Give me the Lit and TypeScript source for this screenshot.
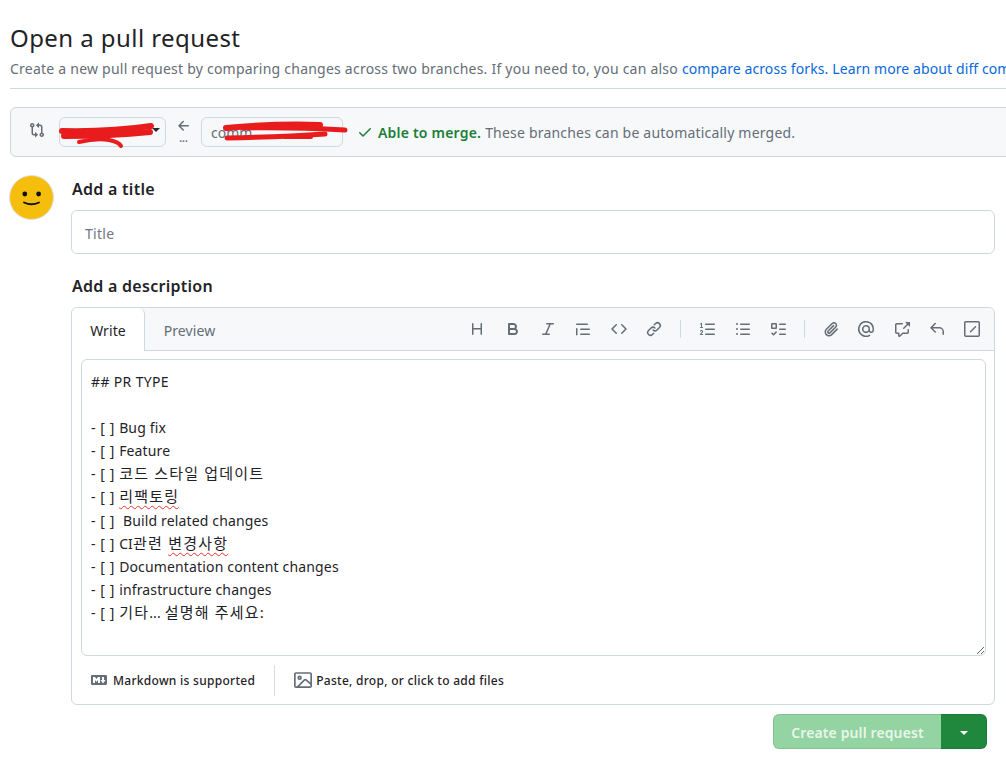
import { LitElement, html, css } from "lit";
import { customElement } from "lit/decorators.js";

const P: Record<string, string> = {
  compare: "M9.573.677A.25.25 0 0 1 10 .854V2.5h1A2.5 2.5 0 0 1 13.5 5v5.628a2.251 2.251 0 1 1-1.5 0V5a1 1 0 0 0-1-1h-1v1.646a.25.25 0 0 1-.427.177L7.177 3.427a.25.25 0 0 1 0-.354ZM6 12v-1.646a.25.25 0 0 1 .427-.177l2.396 2.396a.25.25 0 0 1 0 .354l-2.396 2.396A.25.25 0 0 1 6 15.146V13.5H5A2.5 2.5 0 0 1 2.5 11V5.372a2.25 2.25 0 1 1 1.5 0V11a1 1 0 0 0 1 1ZM4 3.25a.75.75 0 1 0-1.5 0 .75.75 0 0 0 1.5 0ZM12.75 12a.75.75 0 1 0 0 1.5.75.75 0 0 0 0-1.5Z",
  arrow: "M7.78 12.53a.75.75 0 0 1-1.06 0L2.47 8.28a.75.75 0 0 1 0-1.06l4.25-4.25a.751.751 0 0 1 1.042.018.751.751 0 0 1 .018 1.042L4.81 7h7.44a.75.75 0 0 1 0 1.5H4.81l2.97 2.97a.75.75 0 0 1 0 1.06Z",
  check: "M13.78 4.22a.75.75 0 0 1 0 1.06l-7.25 7.25a.75.75 0 0 1-1.06 0L2.22 9.28a.751.751 0 0 1 .018-1.042.751.751 0 0 1 1.042-.018L6 10.94l6.72-6.72a.75.75 0 0 1 1.06 0Z",
  heading: "M3.75 2a.75.75 0 0 1 .75.75V7h7V2.75a.75.75 0 0 1 1.5 0v10.5a.75.75 0 0 1-1.5 0V8.5h-7v4.75a.75.75 0 0 1-1.5 0V2.75A.75.75 0 0 1 3.75 2Z",
  bold: "M4 2h4.5a3.501 3.501 0 0 1 2.852 5.53A3.499 3.499 0 0 1 9.5 14H4a1 1 0 0 1-1-1V3a1 1 0 0 1 1-1Zm1 7v3h4.5a1.5 1.5 0 0 0 0-3Zm3.5-2a1.5 1.5 0 0 0 0-3H5v3Z",
  italic: "M6 2.75A.75.75 0 0 1 6.75 2h6.5a.75.75 0 0 1 0 1.5h-2.505l-3.858 9H9.25a.75.75 0 0 1 0 1.5h-6.5a.75.75 0 0 1 0-1.5h2.505l3.858-9H6.75A.75.75 0 0 1 6 2.75Z",
  quote: "M1.75 2.5h10.5a.75.75 0 0 1 0 1.5H1.75a.75.75 0 0 1 0-1.5Zm4 5h8.5a.75.75 0 0 1 0 1.5h-8.5a.75.75 0 0 1 0-1.5Zm0 5h8.5a.75.75 0 0 1 0 1.5h-8.5a.75.75 0 0 1 0-1.5ZM2.5 7.75v6a.75.75 0 0 1-1.5 0v-6a.75.75 0 0 1 1.5 0Z",
  code: "m11.28 3.22 4.25 4.25a.75.75 0 0 1 0 1.06l-4.25 4.25a.749.749 0 0 1-1.275-.326.749.749 0 0 1 .215-.734L13.94 8l-3.72-3.72a.749.749 0 0 1 .326-1.275.749.749 0 0 1 .734.215Zm-6.56 0a.751.751 0 0 1 1.042.018.751.751 0 0 1 .018 1.042L2.06 8l3.72 3.72a.749.749 0 0 1-.326 1.275.749.749 0 0 1-.734-.215L.47 8.53a.75.75 0 0 1 0-1.06Z",
  link: "m7.775 3.275 1.25-1.25a3.5 3.5 0 1 1 4.95 4.95l-2.5 2.5a3.5 3.5 0 0 1-4.95 0 .751.751 0 0 1 .018-1.042.751.751 0 0 1 1.042-.018 1.998 1.998 0 0 0 2.83 0l2.5-2.5a2.002 2.002 0 0 0-2.83-2.83l-1.25 1.25a.751.751 0 0 1-1.042-.018.751.751 0 0 1-.018-1.042Zm-4.69 9.64a1.998 1.998 0 0 0 2.83 0l1.25-1.25a.751.751 0 0 1 1.042.018.751.751 0 0 1 .018 1.042l-1.25 1.25a3.5 3.5 0 1 1-4.95-4.95l2.5-2.5a3.5 3.5 0 0 1 4.95 0 .751.751 0 0 1-.018 1.042.751.751 0 0 1-1.042.018 1.998 1.998 0 0 0-2.83 0l-2.5 2.5a1.998 1.998 0 0 0 0 2.83Z",
  ol: "M5 3.25a.75.75 0 0 1 .75-.75h8.5a.75.75 0 0 1 0 1.5h-8.5A.75.75 0 0 1 5 3.25Zm0 5a.75.75 0 0 1 .75-.75h8.5a.75.75 0 0 1 0 1.5h-8.5A.75.75 0 0 1 5 8.25Zm0 5a.75.75 0 0 1 .75-.75h8.5a.75.75 0 0 1 0 1.5h-8.5a.75.75 0 0 1-.75-.75ZM.924 10.32a.5.5 0 0 1-.851-.525l.001-.001.001-.002.002-.004.007-.011c.097-.144.215-.273.348-.384.228-.19.588-.392 1.068-.392.468 0 .858.181 1.126.484.259.294.377.673.377 1.038 0 .987-.686 1.495-1.156 1.845l-.047.035c-.303.225-.522.4-.654.597h1.357a.5.5 0 0 1 0 1H.5a.5.5 0 0 1-.5-.5c0-1.005.692-1.52 1.167-1.875l.035-.025c.531-.396.8-.625.8-1.078a.57.57 0 0 0-.128-.376C1.806 10.068 1.695 10 1.5 10a.658.658 0 0 0-.429.163.835.835 0 0 0-.144.153ZM2.003 2.5V6h.503a.5.5 0 0 1 0 1H.5a.5.5 0 0 1 0-1h.503V3.308l-.28.14a.5.5 0 0 1-.446-.895l1.003-.5a.5.5 0 0 1 .723.447Z",
  ul: "M5.75 2.5h8.5a.75.75 0 0 1 0 1.5h-8.5a.75.75 0 0 1 0-1.5Zm0 5h8.5a.75.75 0 0 1 0 1.5h-8.5a.75.75 0 0 1 0-1.5Zm0 5h8.5a.75.75 0 0 1 0 1.5h-8.5a.75.75 0 0 1 0-1.5ZM2 14a1 1 0 1 1 0-2 1 1 0 0 1 0 2Zm1-6a1 1 0 1 1-2 0 1 1 0 0 1 2 0ZM2 4a1 1 0 1 1 0-2 1 1 0 0 1 0 2Z",
  task: "M2 2h4a1 1 0 0 1 1 1v4a1 1 0 0 1-1 1H2a1 1 0 0 1-1-1V3a1 1 0 0 1 1-1Zm4.655 8.595a.75.75 0 0 1 0 1.06L4.03 14.28a.75.75 0 0 1-1.06 0l-1.5-1.5a.749.749 0 0 1 .326-1.275.749.749 0 0 1 .734.215l.97.97 2.095-2.095a.75.75 0 0 1 1.06 0ZM9.75 2.5h5.5a.75.75 0 0 1 0 1.5h-5.5a.75.75 0 0 1 0-1.5Zm0 5h5.5a.75.75 0 0 1 0 1.5h-5.5a.75.75 0 0 1 0-1.5Zm0 5h5.5a.75.75 0 0 1 0 1.5h-5.5a.75.75 0 0 1 0-1.5Zm-7.25-9v3h3v-3Z",
  clip: "M12.212 3.02a1.753 1.753 0 0 0-2.478.003l-5.83 5.83a3.007 3.007 0 0 0-.88 2.127c0 .795.315 1.551.88 2.116.567.567 1.333.89 2.126.89.79 0 1.548-.321 2.116-.89l5.48-5.48a.75.75 0 0 1 1.061 1.06l-5.48 5.48a4.492 4.492 0 0 1-3.177 1.33c-1.2 0-2.345-.487-3.187-1.33a4.483 4.483 0 0 1-1.32-3.176c0-1.2.475-2.345 1.32-3.186l5.83-5.83a3.25 3.25 0 0 1 5.553 2.297c0 .863-.343 1.691-.953 2.301L7.439 12.39c-.375.377-.884.59-1.416.593a1.998 1.998 0 0 1-1.412-.593 1.992 1.992 0 0 1 0-2.828l5.48-5.48a.751.751 0 0 1 1.042.018.751.751 0 0 1 .018 1.042l-5.48 5.48a.492.492 0 0 0 0 .707.499.499 0 0 0 .354.147.495.495 0 0 0 .352-.147l5.833-5.827a1.755 1.755 0 0 0 0-2.481Z",
  mention: "M4.75 2.37a6.501 6.501 0 0 0 6.5 11.26.75.75 0 0 1 .75 1.298A7.999 7.999 0 0 1 .989 4.148 8 8 0 0 1 16 7.75v1.5a2.75 2.75 0 0 1-5.072 1.475 3.999 3.999 0 0 1-6.65-4.19A4 4 0 0 1 12 8v1.25a1.25 1.25 0 0 0 2.5 0V7.867a6.5 6.5 0 0 0-9.75-5.496ZM10.5 8a2.5 2.5 0 1 0-5 0 2.5 2.5 0 0 0 5 0Z",
  ref: "M2.75 3.5a.25.25 0 0 0-.25.25v7.5c0 .138.112.25.25.25h2a.75.75 0 0 1 .75.75v2.19l2.72-2.72a.749.749 0 0 1 .53-.22h4.5a.25.25 0 0 0 .25-.25v-2.5a.75.75 0 0 1 1.5 0v2.5A1.75 1.75 0 0 1 13.25 13H9.06l-2.573 2.573A1.458 1.458 0 0 1 4 14.543V13H2.75A1.75 1.75 0 0 1 1 11.25v-7.5C1 2.784 1.784 2 2.75 2h5.5a.75.75 0 0 1 0 1.5ZM16 1.25v4.146a.25.25 0 0 1-.427.177L14.03 4.03l-3.75 3.75a.749.749 0 0 1-1.275-.326.749.749 0 0 1 .215-.734l3.75-3.75-1.543-1.543A.25.25 0 0 1 11.604 1h4.146a.25.25 0 0 1 .25.25Z",
  reply: "M6.78 1.97a.75.75 0 0 1 0 1.06L3.81 6h6.44A4.75 4.75 0 0 1 15 10.75v2.5a.75.75 0 0 1-1.5 0v-2.5a3.25 3.25 0 0 0-3.25-3.25H3.81l2.97 2.97a.749.749 0 0 1-.326 1.275.749.749 0 0 1-.734-.215L1.47 7.28a.75.75 0 0 1 0-1.06l4.25-4.25a.75.75 0 0 1 1.06 0Z",
  slash: "M0 1.75C0 .784.784 0 1.75 0h12.5C15.216 0 16 .784 16 1.75v12.5A1.75 1.75 0 0 1 14.25 16H1.75A1.75 1.75 0 0 1 0 14.25Zm1.75-.25a.25.25 0 0 0-.25.25v12.5c0 .138.112.25.25.25h12.5a.25.25 0 0 0 .25-.25V1.75a.25.25 0 0 0-.25-.25Zm9.22 3.72a.75.75 0 0 1 1.06 1.06l-5 5a.75.75 0 0 1-1.06-1.06Z",
  markdown: "M14.85 3c.63 0 1.15.52 1.14 1.15v7.7c0 .63-.51 1.15-1.15 1.15H1.15C.52 13 0 12.48 0 11.84V4.15C0 3.52.52 3 1.15 3ZM9 11V5H7L5.5 7 4 5H2v6h2V8l1.5 1.92L7 8v3Zm2.99.5L14.5 8H13V5h-2v3H9.5Z",
  image: "M16 13.25A1.75 1.75 0 0 1 14.25 15H1.75A1.75 1.75 0 0 1 0 13.25V2.75C0 1.784.784 1 1.75 1h12.5c.966 0 1.75.784 1.75 1.75ZM1.75 2.5a.25.25 0 0 0-.25.25v10.5c0 .138.112.25.25.25h.94l.03-.03 6.077-6.078a1.75 1.75 0 0 1 2.412-.06L14.5 10.31V2.75a.25.25 0 0 0-.25-.25Zm12.5 11a.25.25 0 0 0 .25-.25v-.917l-4.298-3.889a.25.25 0 0 0-.344.009L4.81 13.5ZM7 6a2 2 0 1 1-3.999.001A2 2 0 0 1 7 6ZM5.5 6a.5.5 0 1 0-1 0 .5.5 0 0 0 1 0Z",
};

const icon = (n: string, size = 16) => html`<svg class="ic" width=${size} height=${size} viewBox="0 0 16 16" fill="currentColor"><path d=${P[n]}></path></svg>`;

@customElement("app-root")
export class AppRoot extends LitElement {
  static styles = css`
    :host { display: block; width: 1006px; height: 757px; overflow: hidden; background: #fff; color: #1f2328; position: relative;
      font-family: "Noto Sans", "Noto Sans CJK KR", sans-serif; font-size: 14px; }
    .ic { display: block; flex: none; }
    .page { width: 1100px; padding: 21px 0 0 10px; box-sizing: border-box; }
    h1 { margin: 0; font-size: 24px; font-weight: 400; line-height: 34px; letter-spacing: 0.43px; }
    .sub { margin: 4px 0 0; color: #656d76; line-height: 20px; padding-bottom: 9px; border-bottom: 1px solid #d0d7de; white-space: nowrap; letter-spacing: 0.23px; }
    .sub a { color: #0969da; text-decoration: none; letter-spacing: 0.1px; }
    .range { position: relative; margin-top: 18px; height: 50px; box-sizing: border-box; display: flex; align-items: center; background: #f6f8fa; border: 1px solid #d0d7de; border-radius: 6px; padding-left: 18px; color: #656d76; }
    .cmp { margin-top: -4px; }
    .select { position: relative; box-sizing: border-box; height: 30px; border: 1px solid #d0d7de; border-radius: 6px; background: #f6f8fa; display: flex; align-items: center; padding: 1px 0 0 9px; font-size: 14px; }
    .a { width: 107px; margin-left: 14px; }
    .b { width: 142px; }
    .caret { position: absolute; right: 5px; top: 10px; width: 0; height: 0; border: 4px solid transparent; border-top-color: #24292f; border-bottom: 0; }
    .arrow { width: 35px; display: flex; flex-direction: column; align-items: center; margin-top: -4px; }
    .dots { line-height: 8px; font-size: 10px; font-weight: 700; color: #656d76; height: 9px; }
    .merge { display: flex; align-items: center; margin-left: 14px; white-space: nowrap; letter-spacing: 0.2px; }
    .merge b { color: #1a7f37; font-weight: 600; margin: 0 4px 0 5px; }
    .ok { color: #1a7f37; }
    .scribble { position: absolute; left: 0; top: 0; pointer-events: none; }
    .body { display: flex; margin-top: 18px; }
    .avatar { width: 45px; height: 45px; flex: none; margin-left: -1px; }
    .form { width: 924px; margin-left: 17px; }
    h2 { margin: 0; padding-left: 1px; font-size: 16px; line-height: 28px; font-weight: 600; letter-spacing: 0.27px; }
    .title { margin-top: 7px; height: 44px; box-sizing: border-box; border: 1px solid #d0d7de; border-radius: 6px; padding: 2px 13px 0; display: flex; align-items: center; color: #6e7781; letter-spacing: 0.3px; }
    .desc { margin-top: 18px; }
    .editor { margin-top: 7px; border: 1px solid #d0d7de; border-radius: 6px; height: 398px; box-sizing: border-box; display: flex; flex-direction: column; }
    .head { height: 43px; flex: none; box-sizing: border-box; display: flex; background: #f6f8fa; border-bottom: 1px solid #d0d7de; border-radius: 6px 6px 0 0; }
    .tab { width: 73px; height: 43px; padding-top: 1px; box-sizing: border-box; display: flex; align-items: center; justify-content: center; color: #656d76; letter-spacing: 0.1px; }
    .tab.on { background: #fff; color: #1f2328; border-right: 1px solid #d0d7de; border-radius: 6px 6px 0 0; }
    .tab.off { margin-left: 8px; }
    .tools { margin-left: auto; display: flex; align-items: center; color: #656d76; padding-right: 4px; }
    .tools .t { width: 35.4px; display: flex; justify-content: center; }
    .sep { width: 1px; height: 18px; background: #d0d7de; margin: 0 8px; }
    .sep.first { margin: 0 8.5px; }
    .ta { margin: 8px 8px 0 9px; height: 297px; flex: none; box-sizing: border-box; border: 1px solid #d0d7de; border-radius: 6px; padding: 9.5px 9px 0; line-height: 23.2px; white-space: pre; overflow: auto; resize: vertical; }
    .l { display: block; height: 23.2px; letter-spacing: 0.15px; }
    .l.h { letter-spacing: 0.35px; }
    .p { letter-spacing: 0.58px; }
    .ko { font-size: 15px; letter-spacing: 1.2px; line-height: 1; }
    .sp { text-decoration: underline wavy #e5302a 1px; text-underline-offset: 3px; }
    .foot { flex: 1; display: flex; align-items: center; font-size: 12px; font-weight: 500; padding-left: 19px; letter-spacing: 0.28px; }
    .foot .item { display: flex; align-items: center; gap: 6px; color: #1f2328; }
    .foot .item.img { gap: 4px; }
    .foot .item .ic { color: #656d76; }
    .foot .div { width: 1px; height: 31px; background: #d8dee4; margin: 0 19px 0 19px; }
    .actions { display: flex; justify-content: flex-end; margin: 9px 8px 0 0; }
    .btn { display: flex; height: 35px; font-weight: 600; }
    .btn .main { width: 168px; padding-top: 2px; box-sizing: border-box; display: flex; align-items: center; justify-content: center; background: #94d3a2; color: rgba(255,255,255,.8); border: 1px solid rgba(31,35,40,.1); border-right: 0; border-radius: 6px 0 0 6px; letter-spacing: 0.12px; }
    .btn .drop { width: 46px; box-sizing: border-box; display: flex; align-items: center; justify-content: center; background: #1f883d; border: 1px solid rgba(31,35,40,.15); border-left: 0; border-radius: 0 6px 6px 0; }
    .btn .drop i { width: 0; height: 0; border: 4px solid transparent; border-top-color: #fff; border-bottom: 0; margin-top: 2px; }
  `;

  render() {
    const tools1 = ["heading", "bold", "italic", "quote", "code", "link"];
    const tools2 = ["ol", "ul", "task"];
    const tools3 = ["clip", "mention", "ref", "reply", "slash"];
    const t = (n: string) => html`<span class="t">${icon(n)}</span>`;
    const pre = html`<span class="p">- [ ] </span>`;
    return html`
      <div class="page">
        <h1>Open a pull request</h1>
        <p class="sub">Create a new pull request by comparing changes across two branches. If you need to, you can also <a>compare across forks.</a> <a>Learn more about diff comparisons here.</a></p>
        <div class="range">
          <span class="cmp">${icon("compare")}</span>
          <div class="select a"><span class="caret"></span></div>
          <div class="arrow">${icon("arrow")}<span class="dots">...</span></div>
          <div class="select b">comm</div>
          <div class="merge"><span class="ok">${icon("check")}</span><b>Able to merge.</b>These branches can be automatically merged.</div>
          <svg class="scribble" width="360" height="48" fill="none" stroke="#e81c1c" stroke-linecap="round">
            <path stroke-width="6" d="M51 23 Q100 24 140 18"></path>
            <path stroke-width="6" d="M53 28 Q100 28 139 24"></path>
            <path stroke-width="4" d="M68 34 Q85 30 98 32 Q108 34 110 38"></path>
            <path stroke-width="6" d="M215 20 Q270 15 309 17"></path>
            <path stroke-width="5" d="M232 20 Q280 19 334 22"></path>
            <path stroke-width="5" d="M216 30 Q270 29 314 26"></path>
            <path stroke-width="4" d="M274 29 L300 29"></path>
          </svg>
        </div>
        <div class="body">
          <svg class="avatar" viewBox="0 0 45 45">
            <circle cx="22.5" cy="22.5" r="22" fill="#f5bd0c" stroke="#dfe1e4" stroke-width="1"></circle>
            <circle cx="15.8" cy="19" r="2.4" fill="#111"></circle><circle cx="29.6" cy="19" r="2.4" fill="#111"></circle>
            <path d="M15 27.5 Q22.5 31 30 27.5" stroke="#111" stroke-width="1.8" fill="none" stroke-linecap="round"></path>
          </svg>
          <div class="form">
            <h2>Add a title</h2>
            <div class="title">Title</div>
            <h2 class="desc">Add a description</h2>
            <div class="editor">
              <div class="head">
                <div class="tab on">Write</div>
                <div class="tab off">Preview</div>
                <div class="tools">
                  ${tools1.map(t)}<span class="sep first"></span>${tools2.map(t)}<span class="sep"></span>${tools3.map(t)}
                </div>
              </div>
              <div class="ta"><span class="l h">## PR TYPE</span><span class="l"></span><span class="l">${pre}Bug fix</span><span class="l">${pre}Feature</span><span class="l">${pre}<span class="ko">코드 스타일 업데이트</span></span><span class="l">${pre}<span class="ko sp">리팩토링</span></span><span class="l">${pre} Build related changes</span><span class="l">${pre}CI<span class="ko">관련 </span><span class="ko sp">변경사항</span></span><span class="l">${pre}Documentation content changes</span><span class="l">${pre}infrastructure changes</span><span class="l">${pre}<span class="ko">기타</span>... <span class="ko">설명해 주세요:</span></span></div>
              <div class="foot">
                <span class="item">${icon("markdown")}Markdown is supported</span>
                <span class="div"></span>
                <span class="item img">${icon("image", 18)}Paste, drop, or click to add files</span>
              </div>
            </div>
            <div class="actions">
              <div class="btn"><span class="main">Create pull request</span><span class="drop"><i></i></span></div>
            </div>
          </div>
        </div>
      </div>
    `;
  }
}
